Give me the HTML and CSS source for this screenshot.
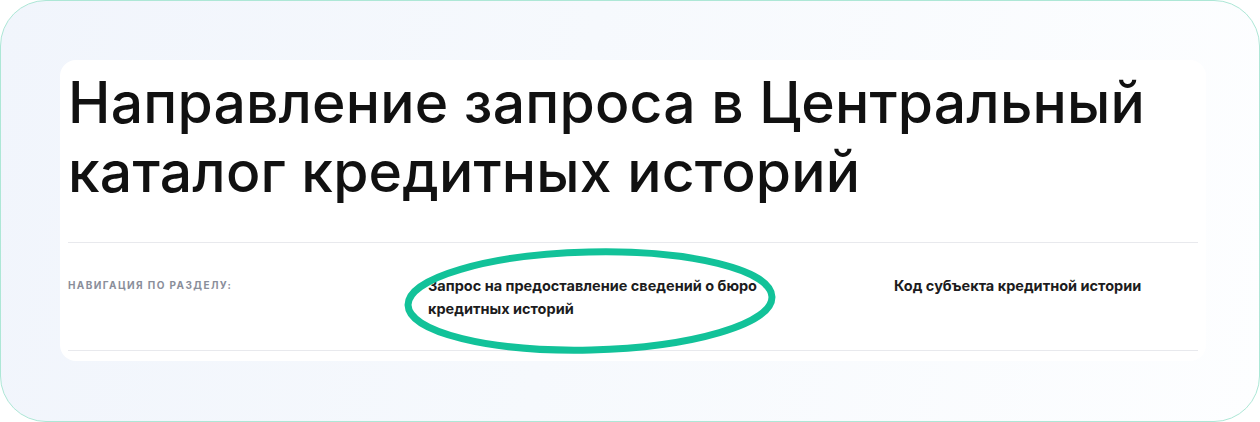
FILE: index.html
```html
<!DOCTYPE html>
<html lang="ru">
<head>
<meta charset="utf-8">
<title>Направление запроса</title>
<link rel="stylesheet" href="styles.css">
</head>
<body>
<div class="frame">
  <div class="card">
    <h1 class="title">Направление запроса в Центральный<br>каталог кредитных историй</h1>
    <div class="nav">
      <div class="nav-label">Навигация по разделу:</div>
      <a class="nav-link nav-link-wide" href="#">Запрос на предоставление сведений о бюро кредитных историй</a>
      <a class="nav-link" href="#">Код субъекта кредитной истории</a>
    </div>
  </div>
  <svg class="mark" width="384" height="116" viewBox="0 0 384 116">
    <ellipse cx="192" cy="58" rx="182" ry="49" fill="none" stroke="#12c299" stroke-width="7" transform="rotate(-1.3 192 58)"/>
  </svg>
</div>
</body>
</html>
```
FILE: styles.css
```css
* { box-sizing: border-box; }
html, body { margin: 0; padding: 0; }
body {
  width: 1260px;
  height: 422px;
  background: #ffffff;
  font-family: Inter, "Noto Sans", sans-serif;
  overflow: hidden;
}
.frame {
  position: relative;
  width: 1260px;
  height: 422px;
  border: 1px solid #ade7d6;
  border-radius: 46px;
  background: linear-gradient(100deg, #f1f5fc 0%, #f6f9fd 45%, #fdfeff 100%);
  padding: 59px 0 0 59px;
}
.card {
  width: 1146px;
  background: #ffffff;
  border-radius: 16px;
  padding: 8px 8px 10px 8px;
}
.title {
  margin: 0;
  font-size: 57px;
  line-height: 69px;
  font-weight: 500;
  color: #111111;
  letter-spacing: 0.2px;
  padding-bottom: 36px;
  border-bottom: 1px solid #e8e9ed;
}
.nav {
  display: grid;
  grid-template-columns: 360px 466px 1fr;
  padding: 31px 0 30px;
  border-bottom: 1px solid #e8e9ed;
}
.nav-label {
  font-size: 10px;
  line-height: 16px;
  font-weight: 700;
  text-transform: uppercase;
  letter-spacing: 1.4px;
  color: #8a8e9a;
  padding-top: 3px;
}
.nav-link {
  font-size: 14.5px;
  line-height: 23px;
  font-weight: 700;
  color: #1c1c20;
  text-decoration: none;
}
.nav-link-wide {
  padding-right: 90px;
}
.mark {
  position: absolute;
  left: 397px;
  top: 242px;
}
```
